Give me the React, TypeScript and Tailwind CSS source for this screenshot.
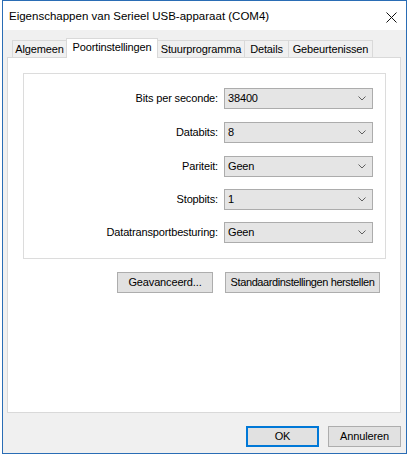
import React from "react";

const font = { fontFamily: '"Liberation Sans", Arial, sans-serif' };

function Chevron() {
  return (
    <svg width="8" height="5" viewBox="0 0 8 5" className="shrink-0">
      <polyline points="0.5,0.5 4,4 7.5,0.5" fill="none" stroke="#606060" strokeWidth="1" />
    </svg>
  );
}

const rows: { label: string; value: string; mt: string }[] = [
  { label: "Bits per seconde:", value: "38400", mt: "mt-0" },
  { label: "Databits:", value: "8", mt: "mt-[13px]" },
  { label: "Pariteit:", value: "Geen", mt: "mt-[13px]" },
  { label: "Stopbits:", value: "1", mt: "mt-[12px]" },
  { label: "Datatransportbesturing:", value: "Geen", mt: "mt-[12px]" },
];

const tabs = [
  { name: "Algemeen", w: "w-[55px]", sel: false },
  { name: "Poortinstellingen", w: "w-[92px]", sel: true },
  { name: "Stuurprogramma", w: "w-[88px]", sel: false },
  { name: "Details", w: "w-[45px]", sel: false },
  { name: "Gebeurtenissen", w: "w-[85px]", sel: false },
];

export default function App() {
  return (
    <div className="w-[408px] h-[455px] bg-white overflow-hidden" style={font}>
      <div className="ml-[2px] w-[405px] h-[454px] border border-[#2a6db5] flex flex-col text-[11px] tracking-[-0.15px] text-black">
        {/* Title bar */}
        <div className="h-[29px] bg-white flex items-center pl-[6px] pr-[8px] shrink-0">
          <span className="text-[11.5px] tracking-normal pt-[3px]">Eigenschappen van Serieel USB-apparaat (COM4)</span>
          <div className="ml-auto pt-[3px] pr-[1px]">
            <svg width="11" height="11" viewBox="0 0 11 11">
              <line x1="0.5" y1="0.5" x2="10.5" y2="10.5" stroke="#111" strokeWidth="1" />
              <line x1="10.5" y1="0.5" x2="0.5" y2="10.5" stroke="#111" strokeWidth="1" />
            </svg>
          </div>
        </div>
        {/* Body */}
        <div className="flex-1 bg-[#f0f0f0] flex flex-col pt-[8px] pl-[4px] pr-[5px]">
          {/* Tabs */}
          <div className="flex items-end h-[19px] pl-[5px]">
            {tabs.map((t, i) =>
              t.sel ? (
                <div
                  key={t.name}
                  className={`${t.w} h-[20px] -mb-px -ml-px relative z-10 bg-white border-l border-t border-r border-[#d9d9d9] flex items-center justify-center pb-[2px]`}
                >
                  {t.name}
                </div>
              ) : (
                <div
                  key={t.name}
                  className={`${t.w} h-[17px] ${i === 0 ? "" : "-ml-px"} bg-[#f0f0f0] border-l border-t border-r border-[#d9d9d9] flex items-center justify-center`}
                >
                  {t.name}
                </div>
              )
            )}
          </div>
          {/* Panel */}
          <div className="h-[356px] bg-white border border-[#d9d9d9] flex flex-col">
            {/* Group box */}
            <div className="mt-[15px] ml-[15px] w-[363px] h-[186px] border border-[#dcdcdc] pt-[14px] pr-[12px] flex flex-col">
              {rows.map((r) => (
                <div key={r.label} className={`flex items-center justify-end ${r.mt}`}>
                  <span className="mr-[6px]">{r.label}</span>
                  <div className="w-[149px] h-[21px] bg-[#e5e5e5] border border-[#acacac] flex items-center pl-[3px] pr-[6px]">
                    <span className="flex-1">{r.value}</span>
                    <Chevron />
                  </div>
                </div>
              ))}
            </div>
            {/* Buttons */}
            <div className="flex justify-end gap-[12px] mt-[13px] pr-[20px]">
              <div className="w-[96px] h-[21px] bg-[#e1e1e1] border border-[#adadad] flex items-center justify-center">
                Geavanceerd...
              </div>
              <div className="w-[155px] h-[21px] bg-[#e1e1e1] border border-[#adadad] flex items-center justify-center tracking-[-0.4px]">
                Standaardinstellingen herstellen
              </div>
            </div>
          </div>
          {/* Dialog buttons */}
          <div className="flex justify-end gap-[9px] mt-[13px]">
            <div className="w-[73px] h-[21px] bg-[#e1e1e1] border-2 border-[#0078d7] flex items-center justify-center">
              OK
            </div>
            <div className="w-[73px] h-[21px] bg-[#e1e1e1] border border-[#adadad] flex items-center justify-center">
              Annuleren
            </div>
          </div>
        </div>
      </div>
    </div>
  );
}
